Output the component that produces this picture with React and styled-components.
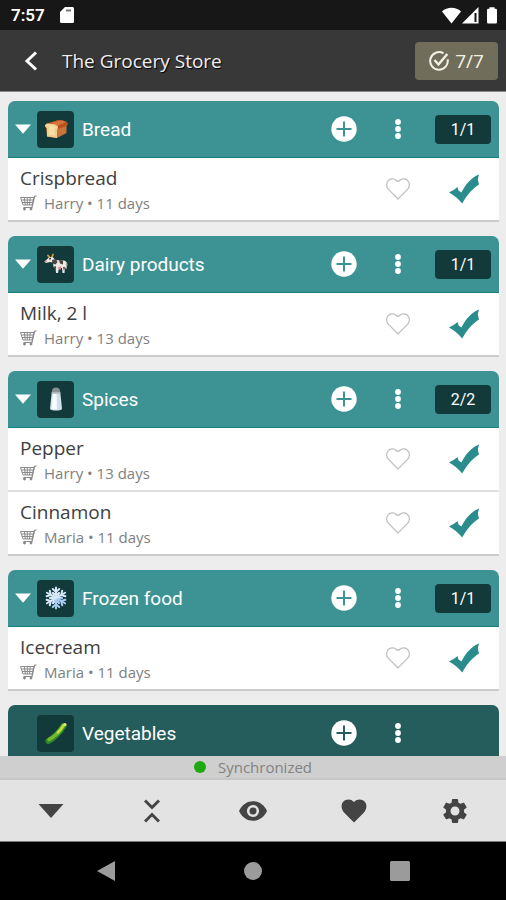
import React, { useState } from 'react';
import styled, { createGlobalStyle, ThemeProvider } from 'styled-components';

const theme = {
  primary: '#3d9393',
  primaryLine: '#16807f',
  primaryDark: '#255d5d',
  tile: '#133a3a',
  check: '#2a8c8c',
  dark: '#383838',
  page: '#ededed',
  app: `'Open Sans', 'Noto Sans', sans-serif`,
  system: `Roboto, 'Liberation Sans', sans-serif`,
};

const GlobalStyle = createGlobalStyle`
  *, *::before, *::after {
    box-sizing: border-box;
  }
  body {
    margin: 0;
    background: #000;
  }
  button {
    padding: 0;
    border: 0;
    background: none;
    color: inherit;
    font: inherit;
    cursor: pointer;
  }
  svg {
    display: block;
  }
`;

const Screen = styled.div`
  display: flex;
  flex-direction: column;
  height: 100vh;
  background: ${({ theme }) => theme.page};
  font-family: ${({ theme }) => theme.app};
`;

const StatusBar = styled.div`
  display: flex;
  align-items: center;
  flex: none;
  height: 30px;
  padding: 0 8px 0 11px;
  background: #171717;
  color: #fff;
`;

const Clock = styled.time`
  margin-right: 15px;
  font-family: ${({ theme }) => theme.system};
  font-size: 17px;
  font-weight: 600;
  line-height: 30px;
`;

const StatusIcons = styled.div`
  display: flex;
  align-items: center;
  margin-left: auto;
`;

const TopBar = styled.header`
  display: flex;
  align-items: center;
  flex: none;
  height: 62px;
  padding: 0 8px 0 16px;
  border-bottom: 1px solid #8a8a8a;
  background: ${({ theme }) => theme.dark};
  color: #f0f0f0;
`;

const BackButton = styled.button`
  display: flex;
  justify-content: center;
  width: 30px;
  margin-right: 16px;
`;

const Title = styled.h1`
  flex: 1;
  margin: 0;
  font-size: 19px;
  font-weight: 400;
  line-height: 28px;
  text-shadow: 1px 1px 1px #000;
`;

const Total = styled.button`
  display: flex;
  align-items: center;
  justify-content: center;
  gap: 6px;
  width: 83px;
  height: 38px;
  border-radius: 4px;
  background: #706e5b;
  color: #f4f1e4;
  font-size: 19px;
`;

const List = styled.main`
  display: flex;
  flex: 1;
  flex-direction: column;
  gap: 14px;
  min-height: 0;
  padding: 9px 7px 0 8px;
  overflow: hidden;
`;

const Card = styled.section`
  flex: none;
`;

const CardHeader = styled.div`
  display: grid;
  grid-template-columns: 29px 37px 1fr 54px 54px 74px;
  align-items: center;
  height: 57px;
  border-bottom: 1px solid ${({ theme }) => theme.primaryLine};
  border-radius: 7px 7px 0 0;
  background: ${({ theme, $muted }) => ($muted ? theme.primaryDark : theme.primary)};
  color: #fff;
`;

const Cell = styled.span`
  display: flex;
  justify-content: center;
`;

const CellButton = styled.button`
  display: flex;
  justify-content: center;
`;

const Tile = styled.span`
  display: flex;
  align-items: center;
  justify-content: center;
  height: 37px;
  border-radius: 4px;
  background: ${({ theme }) => theme.tile};
`;

const CardTitle = styled.h2`
  margin: 0;
  padding: 2px 0 0 8px;
  font-family: ${({ theme }) => theme.system};
  font-size: 19px;
  font-weight: 400;
  line-height: 28px;
`;

const Count = styled.span`
  justify-self: end;
  width: 56px;
  margin-right: 8px;
  border-radius: 4px;
  background: ${({ theme }) => theme.tile};
  font-family: ${({ theme }) => theme.system};
  font-size: 16px;
  line-height: 29px;
  text-align: center;
`;

const Items = styled.ul`
  margin: 0;
  padding: 0;
  list-style: none;
`;

const Item = styled.li`
  display: grid;
  grid-template-columns: 1fr 54px 74px;
  align-items: center;
  height: 64px;
  border-bottom: 2px solid #dedede;
  background: #fff;

  &:last-child {
    border-bottom-color: #cbcbcb;
  }
`;

const ItemText = styled.div`
  padding: 2px 0 0 12px;
`;

const ItemName = styled.p`
  margin: 0;
  color: #404040;
  font-size: 19px;
  line-height: 25px;
`;

const ItemMeta = styled.p`
  display: flex;
  align-items: center;
  gap: 7px;
  margin: 0;
  color: #808080;
  font-size: 15px;
  line-height: 24px;
`;

const TickLabel = styled.label`
  display: flex;
  justify-content: flex-end;
  padding-right: 20px;
  cursor: pointer;

  svg {
    opacity: 0;
  }
  input:checked + svg {
    opacity: 1;
  }
`;

const Tick = styled.input`
  width: 0;
  height: 0;
  margin: 0;
  appearance: none;
`;

const SyncBar = styled.div`
  display: flex;
  align-items: center;
  justify-content: center;
  flex: none;
  gap: 12px;
  height: 24px;
  border-bottom: 2px solid #c6c6c6;
  background: #cfcfcf;
  color: #828282;
  font-size: 15px;
  line-height: 22px;
`;

const SyncDot = styled.span`
  width: 12px;
  height: 12px;
  border-radius: 50%;
  background: #1fa810;
`;

const Toolbar = styled.nav`
  display: grid;
  grid-template-columns: repeat(5, 1fr);
  flex: none;
  height: 62px;
  border-bottom: 1px solid #777;
  background: #e3e3e3;
  color: #444;
`;

const SystemNav = styled.nav`
  display: grid;
  grid-template-columns: repeat(3, 1fr);
  flex: none;
  height: 58px;
  padding: 0 32px;
  background: #000;
  color: #9b9b9b;
`;

const BarButton = styled.button`
  display: flex;
  align-items: center;
  justify-content: center;
`;

const BreadIcon = () => (
  <svg width="26" height="26" viewBox="0 0 26 26" aria-hidden="true">
    <path d="M3 11c-1-2 .5-3.500 3-4l8-2.500c4-.9 10 .3 10.500 3 .2 1.300-.6 2-1 2.500v7l-9.500 5-10-1.500z" fill="#c8743a" />
    <path d="M3 11c-1.500-2 0-3.800 3-4l8-2.500c4-.9 10 .3 10.500 3 .2 1.600-.8 2.500-2 3l-8 2.500z" fill="#b9501f" />
    <path d="M8 7l7-2c3-.5 6 0 7.500 1.500L15 9.500z" fill="#d8753c" />
    <path d="M2 9.500C2.500 7 7 7.500 10 8c3.500.5 5.500 2 5 4-.2.8-.8 1.200-1 1.500V22L4 20.500V12c-1.300-.5-2.200-1.400-2-2.500z" fill="#f3cf8f" />
    <path d="M4 9.500c2-1 8 0 9 2l-1.500 1.500v6.500L6 18.500V11z" fill="#fbdfa5" />
  </svg>
);

const CowIcon = () => (
  <svg width="26" height="26" viewBox="0 0 26 26" aria-hidden="true">
    <path d="M6.500 6.500L5 4.500M9 6l1-2.500" stroke="#d69b35" strokeWidth="1.800" strokeLinecap="round" />
    <path d="M1.500 10.500L6 6.500l3.500-.5 3 3 8 .5c2 0 3 1 3 3v6l-1.500-2-.5 5.500h-2l-.5-5h-3L15 22h-2l-.5-5-2-1-.5-4.500-3-.5-4 1z" fill="#ece8e2" />
    <path d="M9 9l4-1 1.500 3-2 2.500-3-1zM16 9l4 .5v4l-3-1zM11 15l2 .5v3l-1.500-2zM20 16h2l-1 4zM6 7h2v1.500H6z" fill="#4c4544" />
    <path d="M23 11c1.500 1 1 4 0 6" fill="none" stroke="#bcb5ae" />
    <path d="M15 16l3-.5v3h-2zM1.500 10l2-1 .5 2.500-2 .3z" fill="#d98d93" />
  </svg>
);

const SaltIcon = () => (
  <svg width="26" height="26" viewBox="0 0 26 26" aria-hidden="true">
    <path d="M9 5c0-2 1.500-3.500 4-3.500S17 3 17 5l.3 2.500H8.700z" fill="#8a9298" />
    <path d="M8.700 6.500h8.600L19 22.500c0 1.500-2.500 2-6 2s-6-.5-6-2z" fill="#cfe1ec" />
    <path d="M10 7h3.500l.5 16.500c-2 .2-4 .1-5.500-.5z" fill="#f8fdff" />
    <path d="M8.700 6.500h8.600v1.300H8.700z" fill="#b1bcc3" />
  </svg>
);

const SnowIcon = () => (
  <svg width="26" height="26" viewBox="0 0 26 26" aria-hidden="true">
    {[0, 60, 120, 180, 240, 300].map((angle) => (
      <g key={angle} transform={`rotate(${angle} 13 13)`} fill="none" stroke={angle > 60 && angle < 240 ? '#a9cdf2' : '#d8eafc'} strokeLinecap="round">
        <path d="M13 13V2.500" strokeWidth="2" />
        <path d="M9.800 4l3.200 3 3.200-3M10 8l3 2.500L16 8" strokeWidth="2" />
      </g>
    ))}
  </svg>
);

const CucumberIcon = () => (
  <svg width="26" height="26" viewBox="0 0 26 26" aria-hidden="true">
    <path d="M5.500 21C10 18.500 17 12 20.500 6" stroke="#2f8a2c" strokeWidth="6" strokeLinecap="round" fill="none" />
    <path d="M6 19.500C11 17 17 11 20.500 5.500" stroke="#76b82e" strokeWidth="3.500" strokeLinecap="round" fill="none" />
    <path d="M15 12.500c2-2 4-4.500 5.500-7" stroke="#c1de38" strokeWidth="2.500" strokeLinecap="round" fill="none" />
    <circle cx="22" cy="4.500" r="1.500" fill="#f1e77b" />
  </svg>
);

const PlusIcon = ({ color }) => (
  <svg width="26" height="26" viewBox="0 0 26 26" aria-hidden="true">
    <circle cx="13" cy="13" r="12.700" fill="#fff" />
    <path d="M13 5.500v15M5.500 13h15" stroke={color} strokeWidth="2" />
  </svg>
);

const DotsIcon = () => (
  <svg width="6" height="20" viewBox="0 0 6 20" fill="currentColor" aria-hidden="true">
    <circle cx="3" cy="3" r="2.900" />
    <circle cx="3" cy="10" r="2.900" />
    <circle cx="3" cy="17" r="2.900" />
  </svg>
);

const CartIcon = () => (
  <svg width="17" height="16" viewBox="0 0 17 16" fill="none" stroke="#8a8a8a" aria-hidden="true">
    <path d="M.5 2.500h13.500l-2 7.500H3zM1.200 5h12.500M2 7.500h10.800M4.300 2.500l1 7.500M7.300 2.500V10M10.300 2.500l-.8 7.500" />
    <path d="M16.500.7L14.500 1.500 12 12.500H3.500" strokeWidth="1.200" />
    <circle cx="4.500" cy="14" r="1" fill="#777" />
    <circle cx="11" cy="14" r="1" fill="#777" />
  </svg>
);

const HeartOutline = () => (
  <svg width="24" height="22" viewBox="0 0 24 22" aria-hidden="true">
    <path d="M12 21L2.300 11.200C.2 9 .1 5 2 2.800 4.200.4 8.300.3 10.300 2.500c.8.900 2.600.9 3.400 0C15.700.3 19.800.4 22 2.800c1.900 2.200 1.800 6.200-.3 8.400z" fill="none" stroke="#bdbdbd" strokeWidth="1.200" />
  </svg>
);

const CheckIcon = () => (
  <svg width="30" height="30" viewBox="0 0 30 30" aria-hidden="true">
    <path d="M0 18.500C3 17 5.500 15.500 8.500 13l1 3.500 3 2C16.500 10.500 22 3.500 30 .5l-1.200 5 1.200 5C23 15 18 21 13.200 29.500 9.500 25 5 21 0 18.500z" fill={theme.check} />
  </svg>
);

const CATEGORIES = [
  { name: 'Bread', Icon: BreadIcon, count: '1/1', items: [{ name: 'Crispbread', who: 'Harry', days: 11 }] },
  { name: 'Dairy products', Icon: CowIcon, count: '1/1', items: [{ name: 'Milk, 2 l', who: 'Harry', days: 13 }] },
  {
    name: 'Spices',
    Icon: SaltIcon,
    count: '2/2',
    items: [
      { name: 'Pepper', who: 'Harry', days: 13 },
      { name: 'Cinnamon', who: 'Maria', days: 11 },
    ],
  },
  { name: 'Frozen food', Icon: SnowIcon, count: '1/1', items: [{ name: 'Icecream', who: 'Maria', days: 11 }] },
  { name: 'Vegetables', Icon: CucumberIcon, items: [] },
];

const Category = ({ name, Icon, count, items }) => {
  const [open, setOpen] = useState(true);
  const muted = items.length === 0;

  return (
    <Card>
      <CardHeader $muted={muted}>
        {muted ? (
          <Cell />
        ) : (
          <CellButton aria-label={`Toggle ${name}`} aria-expanded={open} onClick={() => setOpen(!open)}>
            <svg width="16" height="10" viewBox="0 0 16 10" fill="currentColor" aria-hidden="true">
              <path d="M0 .5h16L8 9.800z" />
            </svg>
          </CellButton>
        )}
        <Tile>
          <Icon />
        </Tile>
        <CardTitle>{name}</CardTitle>
        <CellButton aria-label={`Add to ${name}`}>
          <PlusIcon color={muted ? theme.primaryDark : theme.primary} />
        </CellButton>
        <CellButton aria-label={`${name} menu`}>
          <DotsIcon />
        </CellButton>
        {count && <Count>{count}</Count>}
      </CardHeader>
      {open && !muted && (
        <Items>
          {items.map((item) => (
            <Item key={item.name}>
              <ItemText>
                <ItemName>{item.name}</ItemName>
                <ItemMeta>
                  <CartIcon />
                  {item.who} • {item.days} days
                </ItemMeta>
              </ItemText>
              <CellButton aria-label={`Favourite ${item.name}`}>
                <HeartOutline />
              </CellButton>
              <TickLabel>
                <Tick type="checkbox" defaultChecked aria-label={item.name} />
                <CheckIcon />
              </TickLabel>
            </Item>
          ))}
        </Items>
      )}
    </Card>
  );
};

const App = () => (
  <ThemeProvider theme={theme}>
    <GlobalStyle />
    <Screen>
      <StatusBar>
        <Clock>7:57</Clock>
        <svg width="14" height="16" viewBox="0 0 14 16" aria-hidden="true">
          <path d="M5 0h7.500Q14 0 14 1.500v13q0 1.500-1.500 1.500h-11Q0 16 0 14.500V5z" fill="#fff" />
          <path d="M6 2.500h5v2H6z" fill="#777" />
        </svg>
        <StatusIcons>
          <svg width="56" height="17" viewBox="0 0 56 17" fill="#fff" aria-hidden="true">
            <path d="M0 4.500C5-.5 14-.5 19 4.500L9.500 16.500z" />
            <path d="M36.500 0v16.500H20zM32.500 6v9h2V6z" fillRule="evenodd" />
            <path d="M47.500 1.800V.3h5v1.500h1.300q1.200 0 1.200 1.200v12.300q0 1.200-1.200 1.200h-7.600q-1.200 0-1.200-1.200V3q0-1.200 1.200-1.200z" />
          </svg>
        </StatusIcons>
      </StatusBar>

      <TopBar>
        <BackButton aria-label="Back">
          <svg width="14" height="20" viewBox="0 0 14 20" fill="none" stroke="#fff" strokeWidth="3" aria-hidden="true">
            <path d="M12 1.500L3 10l9 8.500" />
          </svg>
        </BackButton>
        <Title>The Grocery Store</Title>
        <Total aria-label="7/7 done">
          <svg width="20" height="20" viewBox="0 0 20 20" fill="none" stroke="currentColor" strokeWidth="2" aria-hidden="true">
            <path d="M18.600 8.200A8.800 8.800 0 1 1 14.500 2.400" />
            <path d="M5.500 9l4 4.500L18.300 3" strokeWidth="2.400" />
          </svg>
          7/7
        </Total>
      </TopBar>

      <List>
        {CATEGORIES.map((category) => (
          <Category key={category.name} {...category} />
        ))}
      </List>

      <SyncBar>
        <SyncDot />
        Synchronized
      </SyncBar>

      <Toolbar>
        <BarButton aria-label="Show list">
          <svg width="26" height="14" viewBox="0 0 26 14" fill="currentColor" aria-hidden="true">
            <path d="M.5 0h25L13 14z" />
          </svg>
        </BarButton>
        <BarButton aria-label="Collapse all">
          <svg width="16" height="24" viewBox="0 0 16 24" fill="none" stroke="currentColor" strokeWidth="3" aria-hidden="true">
            <path d="M1 1.500l7 7 7-7M1 22.500l7-7 7 7" />
          </svg>
        </BarButton>
        <BarButton aria-label="Visibility">
          <svg width="28" height="20" viewBox="0 0 28 20" aria-hidden="true">
            <path d="M0 10C6-3 22-3 28 10 22 23 6 23 0 10z" fill="currentColor" />
            <circle cx="14" cy="10" r="4.800" fill="currentColor" stroke="#e3e3e3" strokeWidth="2.600" />
          </svg>
        </BarButton>
        <BarButton aria-label="Favourites">
          <svg width="26" height="24" viewBox="0 0 26 24" fill="currentColor" aria-hidden="true">
            <path d="M13 23.500L3 13.500C.3 10.800-.3 5.500 2.200 2.800 5-.3 10-.3 13 3c3-3.300 8-3.300 10.800-.2 2.500 2.700 1.900 8-.8 10.700z" />
          </svg>
        </BarButton>
        <BarButton aria-label="Settings">
          <svg width="30" height="30" viewBox="0 0 24 24" fill="currentColor" aria-hidden="true">
            <path d="M19.140 12.940c.04-.3.060-.61.060-.94 0-.32-.02-.64-.07-.94l2.030-1.580c.18-.14.230-.41.120-.61l-1.920-3.320c-.12-.22-.37-.29-.59-.22l-2.390.96c-.5-.38-1.030-.7-1.620-.94l-.36-2.540c-.04-.24-.24-.41-.48-.41h-3.840c-.24 0-.43.170-.47.410l-.36 2.540c-.59.240-1.130.570-1.620.940l-2.390-.96c-.22-.08-.47 0-.59.220L2.740 8.870c-.12.210-.08.470.120.610l2.030 1.580c-.05.300-.09.630-.09.940s.020.640.070.940l-2.030 1.580c-.18.140-.23.410-.12.610l1.920 3.320c.12.220.37.290.59.220l2.390-.96c.5.380 1.030.7 1.620.940l.36 2.540c.05.240.24.410.48.410h3.840c.24 0 .44-.17.470-.41l.36-2.540c.59-.24 1.130-.56 1.620-.94l2.390.96c.22.080.47 0 .59-.22l1.920-3.320c.12-.22.070-.47-.12-.61l-2.010-1.580zM12 15.600c-1.980 0-3.600-1.620-3.600-3.600s1.620-3.600 3.600-3.600 3.600 1.620 3.600 3.600-1.620 3.600-3.600 3.600z" />
          </svg>
        </BarButton>
      </Toolbar>

      <SystemNav>
        <BarButton aria-label="System back">
          <svg width="18" height="20" viewBox="0 0 18 20" fill="currentColor" aria-hidden="true">
            <path d="M18 0v20L0 10z" />
          </svg>
        </BarButton>
        <BarButton aria-label="Home">
          <svg width="18" height="18" viewBox="0 0 18 18" fill="currentColor" aria-hidden="true">
            <circle cx="9" cy="9" r="9" />
          </svg>
        </BarButton>
        <BarButton aria-label="Recent apps">
          <svg width="20" height="20" viewBox="0 0 20 20" fill="currentColor" aria-hidden="true">
            <rect width="20" height="20" rx="1.500" />
          </svg>
        </BarButton>
      </SystemNav>
    </Screen>
  </ThemeProvider>
);

export default App;
